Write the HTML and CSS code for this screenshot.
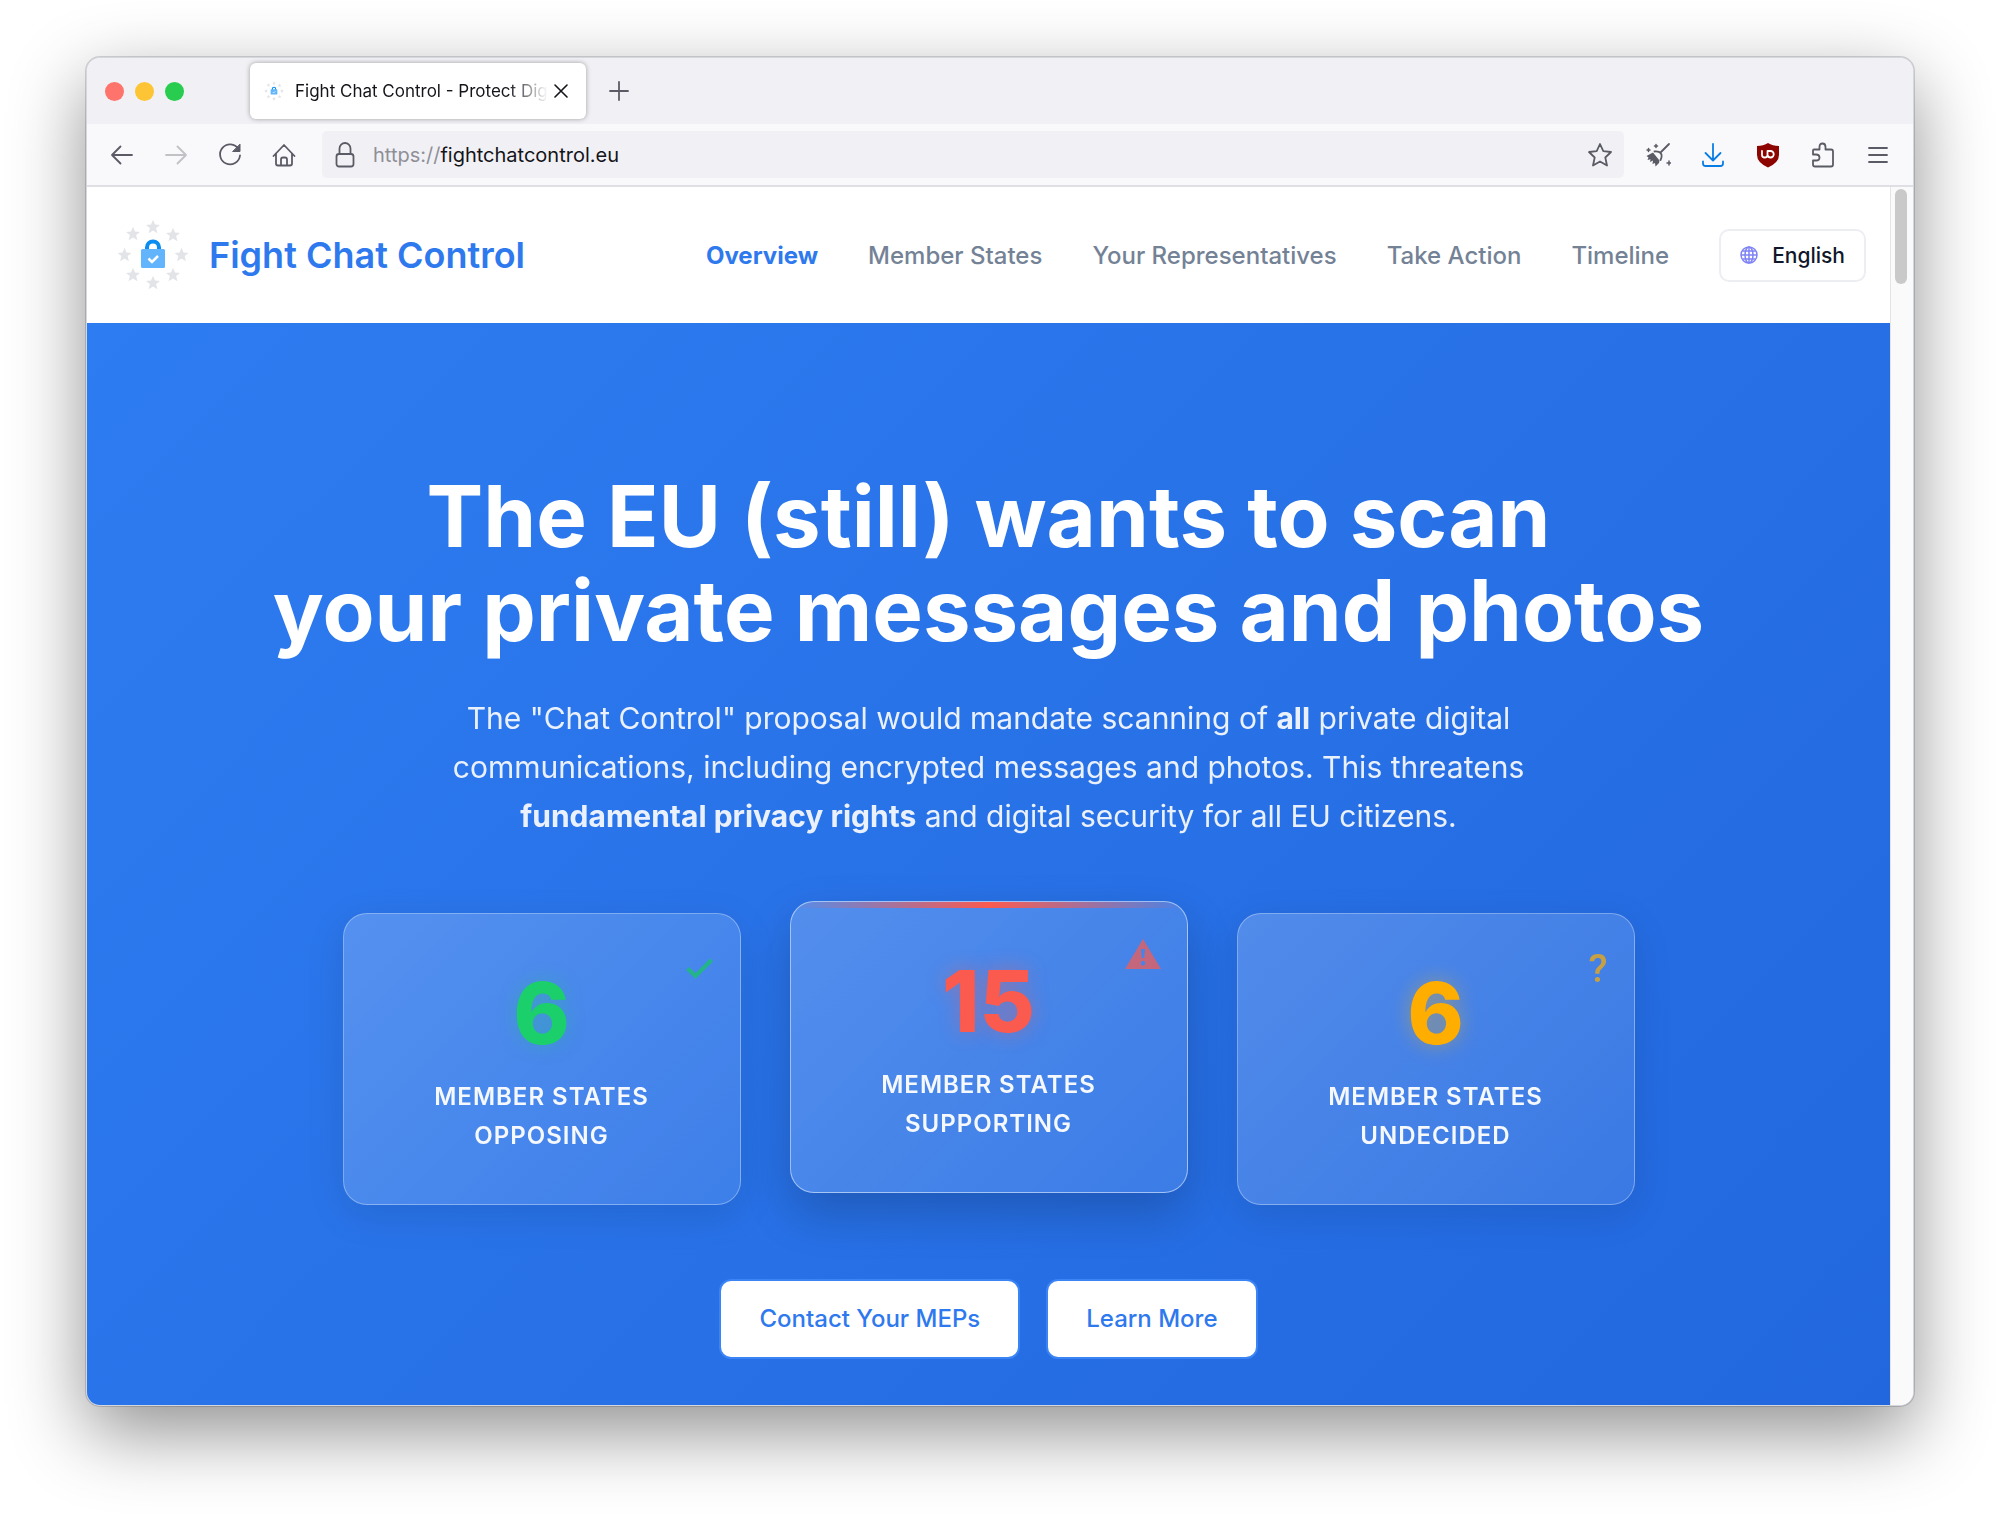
FILE: index.html
```html
<!DOCTYPE html>
<html lang="en">
<head>
    <meta charset="UTF-8">
    <meta name="viewport" content="width=device-width, initial-scale=1.0">
    <title>Fight Chat Control - Protect Digital Privacy</title>
    <link rel="stylesheet" href="styles.css">
</head>
<body>
    <!-- shared shapes -->
    <svg class="defs" width="0" height="0" aria-hidden="true">
        <defs>
            <path id="star" d="M0 -7.2 L2 -2.4 L7 -2.1 L3.1 1.1 L4.4 6.2 L0 3.4 L-4.4 6.2 L-3.1 1.1 L-7 -2.1 L-2 -2.4 Z"/>
            <symbol id="logo" viewBox="0 0 72 72">
                <g fill="#e2e4e8">
                    <use href="#star" x="36" y="8"/>
                    <use href="#star" x="56" y="16"/>
                    <use href="#star" x="64.500" y="36"/>
                    <use href="#star" x="56" y="56"/>
                    <use href="#star" x="36" y="64"/>
                    <use href="#star" x="16" y="56"/>
                    <use href="#star" x="7.500" y="36"/>
                    <use href="#star" x="16" y="15"/>
                </g>
                <path d="M30 32 V28.500 A6 6 0 0 1 42 28.500 V32" fill="none" stroke="#0a8cf0" stroke-width="4"/>
                <rect x="24" y="30" width="24" height="19" rx="1.500" fill="#62b4fd"/>
                <path d="M31.500 39.500 L35 43 L41 37" fill="none" stroke="#fff" stroke-width="2.500"/>
            </symbol>
        </defs>
    </svg>

    <div class="window">
        <div class="tab-bar">
            <div class="lights">
                <span class="light red"></span>
                <span class="light yellow"></span>
                <span class="light green"></span>
            </div>
            <div class="tab">
                <svg class="favicon" viewBox="0 0 72 72"><use href="#logo"/></svg>
                <span class="tab-title">Fight Chat Control - Protect Digital Privacy</span>
                <button class="icon-btn tab-close" aria-label="Close tab">
                    <svg width="14" height="14" viewBox="0 0 14 14"><path d="M1 1 L13 13 M13 1 L1 13" stroke-width="1.600"/></svg>
                </button>
            </div>
            <button class="icon-btn" aria-label="New tab">
                <svg width="20" height="20" viewBox="0 0 20 20"><path d="M10 1 V19 M1 10 H19"/></svg>
            </button>
        </div>

        <div class="toolbar">
            <div class="tool-group history">
                <button class="icon-btn" aria-label="Back">
                    <svg width="24" height="24" viewBox="0 0 24 24"><path d="M22 12 H2 M10.500 3.500 L2 12 L10.500 20.500"/></svg>
                </button>
                <button class="icon-btn" aria-label="Forward" disabled>
                    <svg width="24" height="24" viewBox="0 0 24 24"><path d="M2 12 H22 M13.500 3.500 L22 12 L13.500 20.500"/></svg>
                </button>
                <button class="icon-btn" aria-label="Reload">
                    <svg width="24" height="24" viewBox="0 0 24 24"><path d="M20.500 6 A10 10 0 1 0 22 12.500"/><path d="M22 1.500 V8.500 H15 Z" fill="#5b5b66" stroke-width="1"/></svg>
                </button>
                <button class="icon-btn" aria-label="Home">
                    <svg width="24" height="24" viewBox="0 0 24 24"><path d="M1.500 13 L12 2 L22.500 13 M4 10.500 V20.500 Q4 22.500 6 22.500 H18 Q20 22.500 20 20.500 V10.500 M9 22 V16.500 Q9 14.500 11 14.500 H13 Q15 14.500 15 16.500 V22"/></svg>
                </button>
            </div>
            <label class="url-bar">
                <svg width="20" height="26" viewBox="0 0 20 26"><rect x="1.500" y="12" width="17" height="12.500" rx="2.500"/><path d="M4.500 12 V6.500 A5.500 5.500 0 0 1 15.500 6.500 V12"/></svg>
                <span class="scheme">https://</span>
                <input type="text" class="url" value="fightchatcontrol.eu" aria-label="Address">
                <svg width="26" height="26" viewBox="0 0 26 26"><path d="M13 2 L16.300 9.200 L24 10 L18.300 15.500 L20 23.500 L13 19.500 L6 23.500 L7.700 15.500 L2 10 L9.700 9.200 Z"/></svg>
            </label>
            <div class="tool-group">
                <button class="icon-btn" aria-label="Clean up">
                    <svg width="26" height="26" viewBox="0 0 26 26">
                        <path d="M24 2 L15.500 10.500 M9.500 9.500 Q14 9 16 11.500 Q17.500 14 15.500 18"/>
                        <path d="M8 10.500 L1.500 14 L3.500 15.500 L2.500 18 L5.500 17.200 L5 20 L8 18.500 L7.500 22 L10 21 L10.500 24.500 L14 21 L14.500 18.500 Z" fill="#5b5b66" stroke="none"/>
                        <path d="M24 19 V23 M22 21 H26 M11 2.500 V5.500 M9.500 4 H12.500 M3.500 6.500 V9.500 M2 8 H5" stroke-width="1.500"/>
                    </svg>
                </button>
                <button class="icon-btn download" aria-label="Downloads">
                    <svg width="24" height="26" viewBox="0 0 24 26"><path d="M12 2 V18 M4.500 11 L12 18.500 L19.500 11 M2 19.500 V21.500 Q2 24 4.500 24 H19.500 Q22 24 22 21.500 V19.500"/></svg>
                </button>
                <button class="icon-btn" aria-label="uBlock Origin">
                    <svg width="24" height="26" viewBox="0 0 24 26">
                        <path d="M12 1 Q16.500 4 23 4 V13 Q23 20.500 12 25.500 Q1 20.500 1 13 V4 Q7.500 4 12 1 Z" fill="#8d0500" stroke="none"/>
                        <path d="M6 9 V13 Q6 15.500 8.700 15.500 Q11.500 15.500 11.500 13 V9 H14.500 A3.200 3.200 0 0 1 14.500 15.500 Q12 15.500 11.500 13" stroke="#fff" stroke-width="1.800"/>
                    </svg>
                </button>
                <button class="icon-btn" aria-label="Extensions">
                    <svg width="24" height="26" viewBox="0 0 24 26"><path d="M3 7.500 H8.500 V5 Q8.500 1.500 11.500 1.500 Q14.500 1.500 14.500 5 V7.500 H20 Q22 7.500 22 9.500 V22.500 Q22 24.500 20 24.500 H4 Q2 24.500 2 22.500 V18.500 H5 Q8.500 18.500 8.500 15.500 Q8.500 12.500 5 12.500 H2 V8.500 Q2 7.500 3 7.500 Z"/></svg>
                </button>
                <button class="icon-btn" aria-label="Menu">
                    <svg width="20" height="18" viewBox="0 0 20 18"><path d="M1 2 H19 M1 9 H19 M1 16 H19"/></svg>
                </button>
            </div>
        </div>

        <div class="viewport">
            <div class="page">
                <header class="site-header">
                    <a href="#" class="brand">
                        <svg width="72" height="72" viewBox="0 0 72 72"><use href="#logo"/></svg>
                        <span>Fight Chat Control</span>
                    </a>
                    <nav class="site-nav">
                        <a href="#overview" class="active">Overview</a>
                        <a href="#states">Member States</a>
                        <a href="#reps">Your Representatives</a>
                        <a href="#action">Take Action</a>
                        <a href="#timeline">Timeline</a>
                        <button class="lang">
                            <svg width="18" height="18" viewBox="0 0 18 18"><circle cx="9" cy="9" r="8"/><ellipse cx="9" cy="9" rx="4" ry="8"/><path d="M9 1 V17 M1 9 H17 M2.500 5 H15.500 M2.500 13 H15.500"/></svg>
                            English
                        </button>
                    </nav>
                </header>

                <main class="hero" id="overview">
                    <h1>The EU (still) wants to scan<br>your private messages and photos</h1>
                    <p class="lead">The "Chat Control" proposal would mandate scanning of <strong>all</strong> private digital communications, including encrypted messages and photos. This threatens <strong>fundamental privacy rights</strong> and digital security for all EU citizens.</p>

                    <div class="stats">
                        <div class="stat opposing">
                            <svg class="stat-icon" width="28" height="40" viewBox="0 0 28 40"><path d="M1.500 19.500 L9.500 27 L25.500 11" fill="none" stroke="#14c95f" stroke-width="4"/></svg>
                            <div class="number">6</div>
                            <div class="caption">Member States Opposing</div>
                        </div>
                        <div class="stat supporting">
                            <svg class="stat-icon" width="36" height="40" viewBox="0 0 36 40"><path fill-rule="evenodd" d="M18 2 L36 32 H0 Z M16 12 L16.800 21 H19.200 L20 12 Z M18 24 A2.200 2.200 0 1 0 18 28.400 A2.200 2.200 0 1 0 18 24 Z" fill="#fb5a4f"/></svg>
                            <div class="number">15</div>
                            <div class="caption">Member States Supporting</div>
                        </div>
                        <div class="stat undecided">
                            <span class="stat-icon">?</span>
                            <div class="number">6</div>
                            <div class="caption">Member States Undecided</div>
                        </div>
                    </div>

                    <div class="actions">
                        <a href="#action" class="btn">Contact Your MEPs</a>
                        <a href="#more" class="btn">Learn More</a>
                    </div>
                </main>
            </div>
            <div class="scrollbar"><div class="thumb"></div></div>
        </div>
    </div>
</body>
</html>
```
FILE: styles.css
```css
* {
    box-sizing: border-box;
}
body {
    min-height: 100vh;
    margin: 0;
    padding: 57px 86px;
    background: #fff;
    font-family: Inter, "Liberation Sans", sans-serif;
    color: #15141a;
}
a {
    text-decoration: none;
    color: inherit;
}
button {
    font-family: inherit;
    cursor: pointer;
}
.defs {
    position: absolute;
}

/* browser window */
.window {
    border: 1px solid #d3d7e0;
    border-radius: 14px;
    overflow: hidden;
    background: #fff;
    box-shadow: 0 0 0 1px rgba(0, 0, 0, 0.15), 0 26px 75px rgba(0, 0, 0, 0.44);
}
.tab-bar {
    display: flex;
    align-items: center;
    height: 66px;
    padding-left: 18px;
    background: #f1f1f5;
}
.lights {
    display: flex;
    gap: 11px;
    width: 145px;
}
.light {
    width: 19px;
    height: 19px;
    border-radius: 50%;
}
.red {
    background: #fe736b;
}
.yellow {
    background: #fdc536;
}
.green {
    background: #28cd4f;
}
.tab {
    display: flex;
    align-items: center;
    width: 336px;
    height: 56px;
    padding: 0 18px 0 14px;
    border-radius: 6px;
    background: #fff;
    box-shadow: 0 0 5px rgba(0, 0, 0, 0.35);
}
.favicon {
    flex: none;
    width: 20px;
    height: 20px;
    margin-right: 11px;
}
.tab-title {
    flex: 1;
    overflow: hidden;
    white-space: nowrap;
    font-size: 17px;
    -webkit-mask-image: linear-gradient(to left, transparent, #000 40px);
    mask-image: linear-gradient(to left, transparent, #000 40px);
}
.icon-btn {
    display: flex;
    align-items: center;
    justify-content: center;
    width: 30px;
    height: 30px;
    padding: 0;
    border: 0;
    background: none;
}
.tab-close {
    width: 14px;
    margin-left: 6px;
}
.tab + .icon-btn {
    margin-left: 18px;
}
.icon-btn svg,
.url-bar svg {
    flex: none;
    fill: none;
    stroke: #5b5b66;
    stroke-width: 1.8;
    stroke-linecap: round;
    stroke-linejoin: round;
}
.tab-close svg {
    stroke: #15141a;
}
.icon-btn:disabled {
    opacity: 0.35;
}
.download svg {
    stroke: #0a7de4;
}
.toolbar {
    display: flex;
    align-items: center;
    justify-content: space-between;
    height: 63px;
    padding: 0 20px;
    background: #f9f9fb;
    border-bottom: 2px solid #e0e0e4;
}
.tool-group {
    display: flex;
    gap: 25px;
}
.history {
    gap: 24px;
}
.url-bar {
    display: flex;
    flex: 1;
    align-items: center;
    height: 47px;
    margin: 0 19px 0 23px;
    padding: 0 11px 0 13px;
    border-radius: 5px;
    background: #f1f1f5;
    font-size: 20px;
}
.scheme {
    margin-left: 18px;
    color: #8f8f97;
}
.url {
    flex: 1;
    padding: 0;
    border: 0;
    background: none;
    color: #15141a;
    font: inherit;
    outline: none;
}

/* page inside the window */
.viewport {
    display: flex;
}
.page {
    flex: 1;
}
.scrollbar {
    width: 23px;
    padding: 2px 4px;
    background: #fafafa;
    border-left: 1px solid #e4e4e4;
}
.thumb {
    width: 12px;
    height: 95px;
    border-radius: 6px;
    background: #c9c9c9;
}
.site-header {
    display: flex;
    align-items: center;
    justify-content: space-between;
    height: 136px;
    padding: 0 24px 0 30px;
    background: #fff;
}
.brand {
    display: flex;
    align-items: center;
    gap: 20px;
    font-size: 36px;
    font-weight: 600;
    color: #2e79ee;
}
.site-nav {
    display: flex;
    align-items: center;
    gap: 50px;
    font-size: 24px;
    font-weight: 500;
    color: #748296;
}
.site-nav .active {
    color: #2e79ee;
    font-weight: 700;
}
.lang {
    display: flex;
    align-items: center;
    gap: 14px;
    height: 53px;
    padding: 0 19px;
    border: 2px solid #eceef2;
    border-radius: 10px;
    background: #fff;
    color: #10172a;
    font-size: 21px;
    font-weight: 500;
}
.lang svg {
    fill: none;
    stroke: #7f83f4;
    stroke-width: 1.5;
}

/* hero */
.hero {
    display: flex;
    flex-direction: column;
    align-items: center;
    padding: 147px 24px 48px;
    background: linear-gradient(135deg, #2e7cf1, #2267de);
    color: #fff;
    text-align: center;
}
h1 {
    margin: 0 0 36px;
    font-size: 85px;
    line-height: 94px;
    font-weight: 700;
}
.lead {
    max-width: 1120px;
    margin: 0 0 72px;
    font-size: 30px;
    line-height: 49px;
    opacity: 0.9;
}
.stats {
    display: flex;
    gap: 49px;
    margin-bottom: 76px;
}
.stat {
    position: relative;
    width: 398px;
    padding: 49px 36px;
    overflow: hidden;
    border: 1px solid rgba(255, 255, 255, 0.32);
    border-radius: 24px;
    background: linear-gradient(135deg, rgba(255, 255, 255, 0.2), rgba(255, 255, 255, 0.1));
    box-shadow: 0 10px 39px rgba(0, 0, 0, 0.1);
}
.supporting {
    transform: translateY(-12px);
    border-color: rgba(255, 255, 255, 0.5);
    box-shadow: 0 20px 48px rgba(0, 0, 0, 0.2);
}
.supporting::before {
    content: "";
    position: absolute;
    top: 0;
    left: 0;
    right: 0;
    height: 6px;
    background: linear-gradient(90deg, transparent, #fb5a4f, transparent);
}
.stat-icon {
    position: absolute;
    top: 35px;
    right: 26px;
    height: 40px;
    font-family: Roboto, sans-serif;
    font-size: 39px;
    line-height: 40px;
    font-weight: 500;
    opacity: 0.7;
}
.number {
    margin-bottom: 12px;
    font-size: 85px;
    line-height: 102px;
    font-weight: 800;
}
.opposing .number {
    color: #1bd06a;
    text-shadow: 0 0 20px rgba(27, 208, 106, 0.3);
}
.supporting .number {
    color: #fb5a4f;
    text-shadow: 0 0 20px rgba(251, 90, 79, 0.4);
}
.undecided .number,
.undecided .stat-icon {
    color: #ffae00;
}
.undecided .number {
    text-shadow: 0 0 20px rgba(255, 174, 0, 0.4);
}
.caption {
    padding: 0 40px;
    font-size: 24px;
    line-height: 39px;
    font-weight: 600;
    letter-spacing: 1px;
    text-transform: uppercase;
    opacity: 0.95;
}
.actions {
    display: flex;
    gap: 30px;
}
.btn {
    padding: 0 38px;
    border-radius: 10px;
    background: #fff;
    color: #2e79ee;
    font-size: 24px;
    line-height: 76px;
    font-weight: 500;
    box-shadow: 0 0 0 2px #3b84f5;
}
```
